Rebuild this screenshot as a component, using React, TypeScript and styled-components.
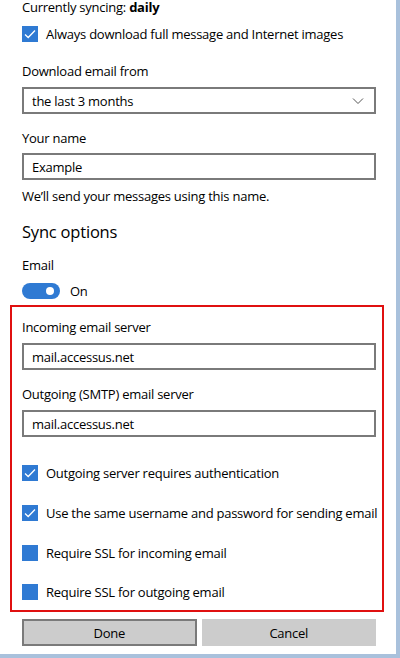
import React from 'react'
import styled, { createGlobalStyle } from 'styled-components'

const GlobalStyle = createGlobalStyle`
  html, body {
    margin: 0;
    padding: 0;
    background: #ffffff;
  }
  body {
    font-family: 'Open Sans', 'Noto Sans', sans-serif;
    font-size: 13px;
    letter-spacing: -0.25px;
    color: #000000;
  }
`

const BLUE = '#2f7ad3'

const Frame = styled.div`
  width: 396px;
  height: 654px;
  overflow: hidden;
  background: #ffffff;
  border-right: 4px solid #a9c1dc;
  border-bottom: 4px solid #a9c1dc;
`

const Content = styled.div`
  padding: 0 20px 0 22px;
`

const Line = styled.div<{ mt?: number }>`
  height: 20px;
  line-height: 20px;
  margin-top: ${({ mt }) => mt ?? 0}px;
  white-space: nowrap;
`

const Status = styled.div`
  height: 14px;
  line-height: 14px;
  white-space: nowrap;
`

const Heading = styled.div`
  height: 26px;
  line-height: 26px;
  margin-top: 13px;
  font-size: 16.5px;
  letter-spacing: -0.2px;
`

const Box = styled.div<{ mt?: number }>`
  box-sizing: border-box;
  height: 27px;
  margin-top: ${({ mt }) => mt ?? 6}px;
  border: 2px solid #7a7a7a;
  padding: 0 10px 0 8px;
  display: flex;
  align-items: center;
  justify-content: space-between;
  background: #ffffff;
`

const CheckRow = styled.label<{ mt: number }>`
  display: flex;
  align-items: center;
  gap: 8px;
  height: 20px;
  margin-top: ${({ mt }) => mt}px;
  white-space: nowrap;
`

const CheckSquare = styled.span`
  width: 16px;
  height: 16px;
  flex: none;
  background: ${BLUE};
  display: flex;
  align-items: center;
  justify-content: center;
`

const ToggleRow = styled.div`
  display: flex;
  align-items: center;
  gap: 10px;
  height: 20px;
  margin-top: 6px;
`

const Track = styled.span`
  position: relative;
  width: 38px;
  height: 16px;
  border-radius: 8px;
  background: ${BLUE};
  flex: none;
`

const Knob = styled.span`
  position: absolute;
  right: 6px;
  top: 4px;
  width: 8px;
  height: 8px;
  border-radius: 50%;
  background: #ffffff;
`

const Highlight = styled.div`
  margin: 4px -8px 0 -12px;
  padding: 10px 6px 8px 10px;
  border: 2px solid #e01010;
`

const Buttons = styled.div`
  display: flex;
  gap: 5px;
  margin-top: 7px;
`

const Button = styled.div<{ primary?: boolean }>`
  box-sizing: border-box;
  flex: 1;
  height: 27px;
  display: flex;
  align-items: center;
  justify-content: center;
  background: #cccccc;
  border: 2px solid ${({ primary }) => (primary ? '#7a7a7a' : '#cccccc')};
`

const Check = ({ checked }: { checked: boolean }) => (
  <CheckSquare>
    {checked && (
      <svg width="14" height="14" viewBox="0 0 14 14">
        <polyline points="2,7.5 5.2,10.5 12,3.5" fill="none" stroke="#fff" strokeWidth="1.3" />
      </svg>
    )}
  </CheckSquare>
)

const Chevron = () => (
  <svg width="12" height="8" viewBox="0 0 12 8">
    <polyline points="1,1.5 6,6.5 11,1.5" fill="none" stroke="#555" strokeWidth="1" />
  </svg>
)

const App = () => (
  <>
    <GlobalStyle />
    <Frame>
      <Content>
        <Status>
          Currently syncing: <b>daily</b>
        </Status>
        <CheckRow mt={10}>
          <Check checked />
          Always download full message and Internet images
        </CheckRow>
        <Line mt={17}>Download email from</Line>
        <Box>
          <span>the last 3 months</span>
          <Chevron />
        </Box>
        <Line mt={14}>Your name</Line>
        <Box mt={5}>Example</Box>
        <Line mt={6}>We’ll send your messages using this name.</Line>
        <Heading>Sync options</Heading>
        <Line mt={10}>Email</Line>
        <ToggleRow>
          <Track>
            <Knob />
          </Track>
          On
        </ToggleRow>
        <Highlight>
          <Line>Incoming email server</Line>
          <Box>mail.accessus.net</Box>
          <Line mt={14}>Outgoing (SMTP) email server</Line>
          <Box>mail.accessus.net</Box>
          <CheckRow mt={26}>
            <Check checked />
            Outgoing server requires authentication
          </CheckRow>
          <CheckRow mt={20}>
            <Check checked />
            Use the same username and password for sending email
          </CheckRow>
          <CheckRow mt={20}>
            <Check checked={false} />
            Require SSL for incoming email
          </CheckRow>
          <CheckRow mt={19}>
            <Check checked={false} />
            Require SSL for outgoing email
          </CheckRow>
        </Highlight>
        <Buttons>
          <Button primary>Done</Button>
          <Button>Cancel</Button>
        </Buttons>
      </Content>
    </Frame>
  </>
)

export default App
